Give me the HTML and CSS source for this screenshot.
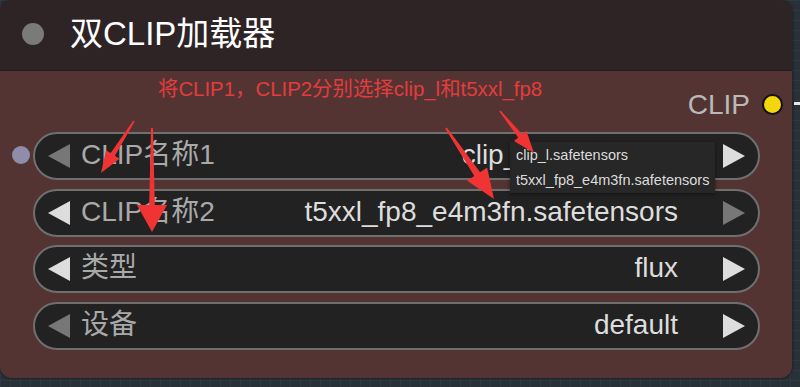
FILE: index.html
```html
<!DOCTYPE html>
<html lang="zh-CN">
<head>
<meta charset="utf-8">
<title>双CLIP加载器</title>
<link rel="stylesheet" href="styles.css">
</head>
<body>
<div class="canvas">
  <div class="node">
    <div class="title">
      <span class="title-dot"></span>
      <span class="title-text">双CLIP加载器</span>
    </div>
    <div class="body">
      <div class="outputs">
        <span class="out-label">CLIP</span>
        <span class="out-dot"></span>
      </div>
      <div class="widgets">
        <div class="widget">
          <span class="in-dot"></span>
          <svg class="tri dim" viewBox="0 0 22 24"><polygon points="22,0 22,24 0,12"/></svg>
          <span class="label">CLIP名称1</span>
          <span class="value">clip_l.safetensors</span>
          <svg class="tri" viewBox="0 0 22 24"><polygon points="0,0 0,24 22,12"/></svg>
        </div>
        <div class="widget">
          <svg class="tri" viewBox="0 0 22 24"><polygon points="22,0 22,24 0,12"/></svg>
          <span class="label">CLIP名称2</span>
          <span class="value">t5xxl_fp8_e4m3fn.safetensors</span>
          <svg class="tri dim" viewBox="0 0 22 24"><polygon points="0,0 0,24 22,12"/></svg>
        </div>
        <div class="widget">
          <svg class="tri" viewBox="0 0 22 24"><polygon points="22,0 22,24 0,12"/></svg>
          <span class="label">类型</span>
          <span class="value">flux</span>
          <svg class="tri" viewBox="0 0 22 24"><polygon points="0,0 0,24 22,12"/></svg>
        </div>
        <div class="widget">
          <svg class="tri dim" viewBox="0 0 22 24"><polygon points="22,0 22,24 0,12"/></svg>
          <span class="label">设备</span>
          <span class="value">default</span>
          <svg class="tri" viewBox="0 0 22 24"><polygon points="0,0 0,24 22,12"/></svg>
        </div>
      </div>
    </div>
    <div class="note">将CLIP1，CLIP2分别选择clip_l和t5xxl_fp8</div>
    <div class="menu">
      <div class="menu-item">clip_l.safetensors</div>
      <div class="menu-item">t5xxl_fp8_e4m3fn.safetensors</div>
    </div>
    <svg class="arrows" viewBox="0 0 792 378" width="792" height="378">
      <polygon points="133.32,120.57 110.68,153.09 106.04,150.14 101,173 119.54,158.72 114.90,155.77 134.68,121.43"/>
      <polygon points="151,128 149.2,205 137,205 152,232 167,205 154.8,205 153,128"/>
      <polygon points="445.17,128.56 474.30,176.10 467.26,180.86 494,199 487.14,167.42 480.10,172.18 446.83,127.44"/>
      <polygon points="499.38,111.50 518.22,137.47 513.94,140.93 534,153 526.38,130.87 522.10,134.33 500.62,110.50"/>
    </svg>
  </div>
  <div class="link"></div>
</div>
</body>
</html>
```

FILE: styles.css
```css
html, body {
  margin: 0;
  padding: 0;
  background: #283038;
  overflow: hidden;
}

.canvas {
  width: 800px;
  height: 387px;
  display: flex;
  align-items: flex-start;
  background-color: #283038;
  background-image:
    linear-gradient(to right, rgba(255,255,255,0.035) 1px, transparent 1px),
    linear-gradient(to bottom, rgba(255,255,255,0.035) 1px, transparent 1px);
  background-size: 10px 10px;
  font-family: "Liberation Sans", "Noto Sans CJK SC", sans-serif;
}

.node {
  position: relative;
  width: 792px;
  height: 378px;
  flex: none;
  border-radius: 12px;
  background: #533433;
  box-shadow: 0 0 3px rgba(0,0,0,0.6);
  overflow: hidden;
}

.title {
  height: 70px;
  background: #2e2426;
  border-bottom: 1px solid #241b1c;
  display: flex;
  align-items: center;
  padding-left: 22px;
  gap: 26px;
}

.title-dot {
  width: 22px;
  height: 22px;
  border-radius: 50%;
  background: #7a7a7a;
  margin-top: -2px;
}

.title-text {
  color: #ffffff;
  font-size: 33px;
  line-height: 1;
  margin-top: -4px;
}

.outputs {
  height: 61px;
  box-sizing: border-box;
  padding-top: 7px;
  padding-right: 9px;
  display: flex;
  align-items: center;
  justify-content: flex-end;
  gap: 12px;
}

.out-label {
  color: #b9b9b9;
  font-size: 28px;
  line-height: 1;
}

.out-dot {
  width: 17px;
  height: 17px;
  border-radius: 50%;
  background: #f3d60c;
  border: 2px solid #111111;
  margin-top: -2px;
}

.widgets {
  display: flex;
  flex-direction: column;
  gap: 8.67px;
  padding-left: 33px;
  padding-right: 32px;
}

.widget {
  position: relative;
  height: 48px;
  box-sizing: border-box;
  border: 2px solid #6f6f6f;
  border-radius: 24px;
  background: #222222;
  display: flex;
  align-items: center;
  padding: 0 13px;
}

.in-dot {
  position: absolute;
  left: -23px;
  top: 50%;
  width: 18px;
  height: 18px;
  margin-top: -10px;
  border-radius: 50%;
  background: #8e8dab;
}

.tri {
  width: 22px;
  height: 24px;
  flex: none;
  fill: #dddddd;
}

.tri.dim {
  fill: #777777;
}

.label {
  margin-left: 11px;
  color: #a9a9a9;
  font-size: 28px;
  line-height: 1;
  margin-top: -2px;
}

.value {
  margin-left: auto;
  margin-right: 45px;
  color: #dddddd;
  font-size: 28px;
  line-height: 1;
  margin-top: -2px;
}

.note {
  position: absolute;
  left: 158px;
  top: 77px;
  color: #e43c3c;
  font-size: 20.4px;
  line-height: 24px;
  white-space: nowrap;
}

.menu {
  position: absolute;
  left: 510px;
  top: 142px;
  width: 205px;
  height: 51px;
  box-sizing: border-box;
  padding-top: 1px;
  background: #272727;
  box-shadow: 0 1px 4px rgba(0,0,0,0.5);
}

.menu-item {
  height: 25px;
  line-height: 25px;
  padding-left: 6px;
  color: #dcdcdc;
  font-size: 14.5px;
  white-space: nowrap;
}

.arrows {
  position: absolute;
  left: 0;
  top: 0;
  pointer-events: none;
  fill: #f03434;
}

.link {
  width: 8px;
  height: 3px;
  margin-top: 102px;
  margin-left: 2px;
  background: #e8e8e8;
}
```
